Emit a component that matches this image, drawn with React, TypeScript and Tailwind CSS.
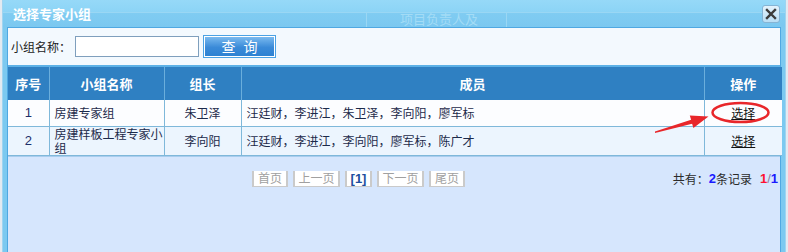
const groups = [
  { no: 1, name: '房建专家组', leader: '朱卫泽', members: '汪廷财，李进江，朱卫泽，李向阳，廖军标' },
  { no: 2, name: '房建样板工程专家小组', leader: '李向阳', members: '汪廷财，李进江，李向阳，廖军标，陈广才' },
];

const pages = [
  { label: '首页', w: 'w-[36px]' },
  { label: '上一页', w: 'w-[47px]' },
  { label: '[1]', w: 'w-[27px]', current: true },
  { label: '下一页', w: 'w-[47px]' },
  { label: '尾页', w: 'w-[36px]' },
];

export default function App() {
  return (
    <div className="relative w-[788px] h-[252px] overflow-hidden bg-[#e3eaf1] font-['Noto_Sans_CJK_SC','Noto_Sans',sans-serif]">
      <div className="ml-[2px] w-[784px] h-full flex flex-col bg-[#7cc9f0] px-[4px] border-x border-[#9fd4f0]">
        {/* Title bar */}
        <div className="relative h-[27px] -mx-[4px] px-[10px] flex items-center justify-between bg-[linear-gradient(#96d9f8_0,#8cd4f6_12px,#80ccf2_13px,#7bc8f0_100%)] overflow-hidden">
          {/* page behind, showing through */}
          <div className="absolute left-0 right-0 top-[12px] h-px bg-[#9ad7f4]" />
          <div className="absolute left-[363px] top-[12px] bottom-0 w-px bg-[#9ad7f4]" />
          <div className="absolute left-[503px] top-[12px] bottom-0 w-px bg-[#9ad7f4]" />
          <div className="absolute left-[397px] top-[12px] text-[13px] leading-[14px] text-[#a3dcf6]">项目负责人及</div>

          <span className="relative text-[13px] font-bold text-white leading-none">选择专家小组</span>
          <button className="relative mr-[-5px] w-[18px] h-[18px] mt-[1px] rounded-[3px] border border-[#86b4d4] bg-[linear-gradient(#e4f3fc,#b9def5)] flex items-center justify-center">
            <svg width="12" height="12" viewBox="0 0 12 12">
              <path d="M2 2 L10 10 M10 2 L2 10" stroke="#3c3c3c" strokeWidth="2.4" strokeLinecap="square" />
            </svg>
          </button>
        </div>

        {/* Content */}
        <div className="flex-1 flex flex-col border border-[#4fa8e2] border-b-0 bg-[#f3f9fe]">
          {/* Search */}
          <div className="h-[39px] flex items-center pl-[3px] border-b-2 border-[#5db1e6]">
            <span className="text-[12px] text-[#222]">小组名称：</span>
            <input
              className="ml-[4px] w-[124px] h-[21px] border border-[#7f9fbd] bg-white outline-none"
              type="text"
            />
            <button className="ml-[4px] w-[73px] h-[23px] border border-[#4ba2e4] p-px bg-white">
              <span className="flex h-full items-center justify-center bg-[linear-gradient(#79b9ef,#3a8ad8_55%,#2d82d2)] text-[14px] text-white tracking-[8px] pl-[8px]">
                查询
              </span>
            </button>
          </div>

          {/* Table */}
          <table className="table-fixed border-collapse w-full text-[12px]">
            <colgroup>
              <col className="w-[41px]" />
              <col className="w-[115px]" />
              <col className="w-[77px]" />
              <col className="w-[463px]" />
              <col className="w-[78px]" />
            </colgroup>
            <thead>
              <tr className="h-[33px] bg-[#2f80c2] text-white text-[13px] font-bold">
                <th className="border-r border-[#6aaedc] font-bold">序号</th>
                <th className="border-r border-[#6aaedc] font-bold">小组名称</th>
                <th className="border-r border-[#6aaedc] font-bold">组长</th>
                <th className="border-r border-[#6aaedc] font-bold">成员</th>
                <th className="font-bold">操作</th>
              </tr>
            </thead>
            <tbody className="text-[#1c2a4a]">
              {groups.map((g) => (
                <tr
                  key={g.no}
                  className={`border-b border-[#7fb8da] ${g.no === 1 ? 'h-[26px] bg-[#fcfdff]' : 'h-[29px] bg-[#ecf5fe]'}`}
                >
                  <td className="border-r border-[#7fb8da] text-center font-['Liberation_Sans',sans-serif] text-[13px] text-[#1d2f6b]">
                    {g.no}
                  </td>
                  <td className="border-r border-[#7fb8da] pl-[5px] pr-0 leading-[14px] break-all">{g.name}</td>
                  <td className="border-r border-[#7fb8da] text-center">{g.leader}</td>
                  <td className="border-r border-[#7fb8da] pl-[5px]">{g.members}</td>
                  <td className="text-center">
                    <a className="underline text-[#111] cursor-pointer">选择</a>
                  </td>
                </tr>
              ))}
            </tbody>
          </table>

          {/* Footer / pagination */}
          <div className="flex-1 bg-[#d6e6fd] border-t border-[#a9cdee] pt-[14px] pr-[2px] flex items-start">
            <div className="ml-[244px] flex gap-[5px]">
              {pages.map((p) => (
                <span
                  key={p.label}
                  className={`${p.w} h-[16px] flex items-center justify-center bg-white border-x-2 border-b border-[#cacaca] text-[12px] leading-none ${
                    p.current ? "font-bold text-[#1d4f9e] font-['Liberation_Sans',sans-serif] text-[13px]" : 'text-[#a0a0a0]'
                  }`}
                >
                  {p.label}
                </span>
              ))}
            </div>
            <div className="ml-auto h-[16px] flex items-center text-[12px] text-[#2b2b2b]">
              共有：<b className="text-[#1a1aff] font-['Liberation_Sans',sans-serif] text-[13px]">2</b>条记录
              <span className="ml-[8px] font-bold font-['Liberation_Sans',sans-serif] text-[13px]">
                <span className="text-[#ff1030]">1</span>
                <span className="text-[#8a7a9a] font-normal">/</span>
                <span className="text-[#1a1aff]">1</span>
              </span>
            </div>
          </div>
        </div>
      </div>

      {/* Red annotation */}
      <svg className="absolute inset-0 pointer-events-none" width="788" height="252" viewBox="0 0 788 252">
        <ellipse cx="740.5" cy="112.5" rx="28" ry="9.5" fill="none" stroke="#e8262a" strokeWidth="2.5" />
        <polygon
          points="655,133 692.1,123.8 693.4,128 708.5,116.5 689.8,115.6 691.1,119.8 655,131.6"
          fill="#e8262a"
        />
      </svg>
    </div>
  );
}
